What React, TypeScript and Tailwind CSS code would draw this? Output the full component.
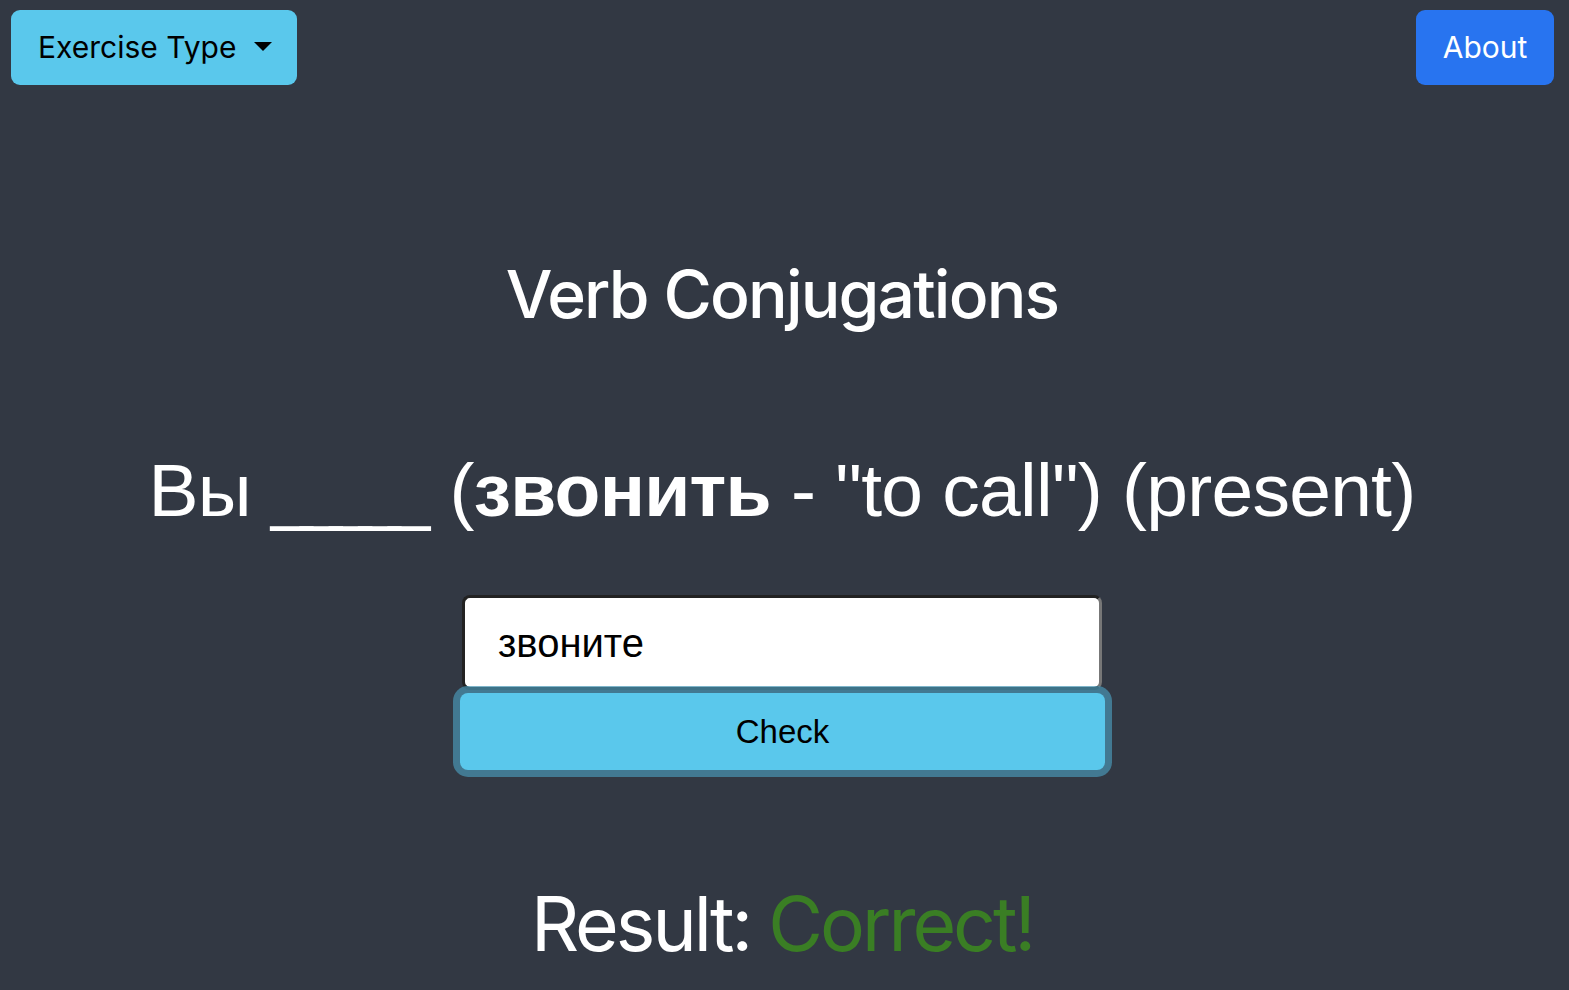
import React from "react";

export default function App() {
  return (
    <div
      className="min-h-[990px] w-full bg-[#323843] text-white"
      style={{ fontFamily: "Inter, 'Liberation Sans', sans-serif" }}
    >
      <div className="flex items-start justify-between pl-[11px] pr-[15px] pt-[10px]">
        <button className="flex h-[75px] w-[286px] items-center gap-[18px] rounded-[9px] bg-[#5ac8ec] pl-[27px] text-[30px] text-black">
          <span>Exercise Type</span>
          <svg width="18" height="10" viewBox="0 0 18 10" className="mt-[-2px]">
            <path d="M0 0 L18 0 L9 9 Z" fill="#000" />
          </svg>
        </button>
        <button className="flex h-[75px] w-[138px] items-center justify-center rounded-[9px] bg-[#2874f0] text-[30px] text-white">
          About
        </button>
      </div>

      <div className="mr-[5px] flex flex-col items-center">
        <h1 className="mt-[169px] text-[66px] leading-[80px] font-medium tracking-[-0.028em]">Verb Conjugations</h1>
        <p className="mt-[111px] font-['Liberation_Sans',sans-serif] text-[75px] leading-[90px] tracking-[-0.01em]">
          Вы <span className="tracking-[-0.165em]">____</span>_ (<b className="font-bold">звонить</b> - "to call") (present)
        </p>
        <div className="mt-[60px] flex w-[640px] flex-col">
          <div className="flex h-[95px] items-center rounded-[8px] border-[3px] border-[#222] border-r-[#777] bg-white pl-[33px] font-['Liberation_Sans',sans-serif] text-[40px] text-black">
            звоните
          </div>
          <button className="mt-[3px] h-[77px] w-[645px] -ml-[2px] rounded-[8px] bg-[#5ac8ec] font-['Liberation_Sans',sans-serif] text-[33px] text-black shadow-[0_0_0_7px_rgba(73,150,180,0.7)]">
            Check
          </button>
        </div>
        <p className="mt-[109px] text-[75px] leading-[90px] tracking-[-0.04em]">
          Result: <span className="text-[#3a7e24]">Correct!</span>
        </p>
      </div>
    </div>
  );
}
